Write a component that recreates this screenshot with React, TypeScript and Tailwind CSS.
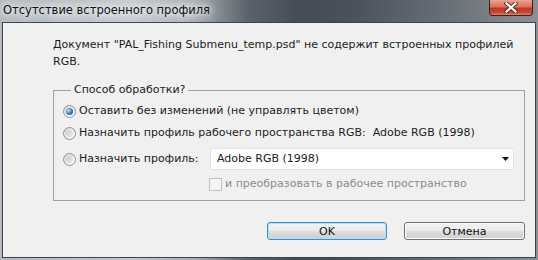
import React from "react";

function Radio({ checked }: { checked?: boolean }) {
  return (
    <div className="w-[13px] h-[13px] shrink-0 rounded-full border border-[#8e8f8f] bg-[linear-gradient(135deg,#d4d4d4,#f7f7f7_70%,#ffffff)] flex items-center justify-center">
      {checked ? (
        <div className="w-[7px] h-[7px] rounded-full bg-[radial-gradient(circle_at_35%_35%,#b5ddfc,#2f7bcb_55%,#0d4a8c)]" />
      ) : (
        <div className="w-[7px] h-[7px] rounded-full bg-[linear-gradient(135deg,#c9c9c9,#eeeeee)]" />
      )}
    </div>
  );
}

export default function App() {
  return (
    <div className="w-[538px] h-[260px] overflow-hidden relative flex flex-col font-['DejaVu_Sans',sans-serif] text-[11px] text-[#1c1c1c] bg-[linear-gradient(90deg,#b4b9be_0%,#c6cace_25%,#a9aeb3_36%,#5c626a_46%,#454b53_56%,#4c525a_66%,#676d74_82%,#8a9096_100%)]">
      {/* title bar */}
      <div className="h-[22px] shrink-0 flex items-center pl-[3px] relative">
        <span className="text-[11.5px] text-[#111] [text-shadow:0_0_6px_#ffffff,0_0_10px_#ffffff,0_0_14px_#ffffff]">
          Отсутствие встроенного профиля
        </span>
        <div className="absolute top-0 right-[5px] w-[44px] h-[16px] rounded-b-[4px] border border-t-0 border-[#4a1c14] bg-[linear-gradient(180deg,#e7a595_0%,#d7725f_45%,#c0381f_55%,#c94a2f_85%,#e08a6c_100%)] flex items-center justify-center">
          <svg width="14" height="11" viewBox="0 0 14 11">
            <path d="M2.5 1.5 L11.5 9.5 M11.5 1.5 L2.5 9.5" stroke="#5a2a22" strokeWidth="4" strokeLinecap="square" />
            <path d="M2.5 1.5 L11.5 9.5 M11.5 1.5 L2.5 9.5" stroke="#ffffff" strokeWidth="2.2" strokeLinecap="square" />
          </svg>
        </div>
      </div>

      {/* content */}
      <div className="mx-[2px] h-[236px] border border-[#3a434d] bg-[#f0f0f0] flex flex-col">
        <div className="pl-[50px] pt-[13px] leading-[17px]">
          <div>Документ "PAL_Fishing Submenu_temp.psd" не содержит встроенных профилей</div>
          <div>RGB.</div>
        </div>

        <fieldset className="ml-[50px] mt-[12px] w-[472px] border border-[#a0a0a0] pb-[9px] pl-[9px]">
          <legend className="ml-[8px] px-[3px] leading-[16px]">Способ обработки?</legend>
          <div className="mt-[2px] h-[22px] flex items-center">
            <Radio checked />
            <span className="ml-[3px]">Оставить без изменений (не управлять цветом)</span>
          </div>
          <div className="h-[22px] flex items-center">
            <Radio />
            <span className="ml-[3px]">Назначить профиль рабочего пространства RGB:&nbsp; Adobe RGB (1998)</span>
          </div>
          <div className="mt-[4px] h-[22px] flex items-center">
            <Radio />
            <span className="ml-[3px] w-[131px]">Назначить профиль:</span>
            <div className="w-[304px] h-[22px] bg-white border border-[#e2e2e2] flex items-center justify-between pl-[6px] pr-[4px]">
              <span>Adobe RGB (1998)</span>
              <svg width="7" height="4" viewBox="0 0 7 4">
                <path d="M0 0 L7 0 L3.5 4 Z" fill="#111" />
              </svg>
            </div>
          </div>
          <div className="mt-[8px] h-[13px] flex items-center">
            <div className="ml-[146px] w-[13px] h-[13px] border border-[#c2c2c2] bg-[#f4f4f4]" />
            <span className="ml-[3px] text-[#8c8c8c]">и преобразовать в рабочее пространство</span>
          </div>
        </fieldset>

        <div className="mt-[21px] flex justify-end pr-[10px] gap-[17px]">
          <button className="w-[120px] h-[18px] rounded-[3px] border border-[#3c8fd0] bg-[linear-gradient(180deg,#f2f2f2_0%,#ebebeb_50%,#dddddd_51%,#cfcfcf_100%)] shadow-[inset_0_0_0_1px_#a8e2f8] leading-none text-[11px] text-[#111]">
            OK
          </button>
          <button className="w-[121px] h-[18px] rounded-[3px] border border-[#707070] bg-[linear-gradient(180deg,#f2f2f2_0%,#ebebeb_50%,#dddddd_51%,#cfcfcf_100%)] shadow-[inset_0_0_0_1px_#fcfcfc] leading-none text-[11px] text-[#111]">
            Отмена
          </button>
        </div>
      </div>
    </div>
  );
}
